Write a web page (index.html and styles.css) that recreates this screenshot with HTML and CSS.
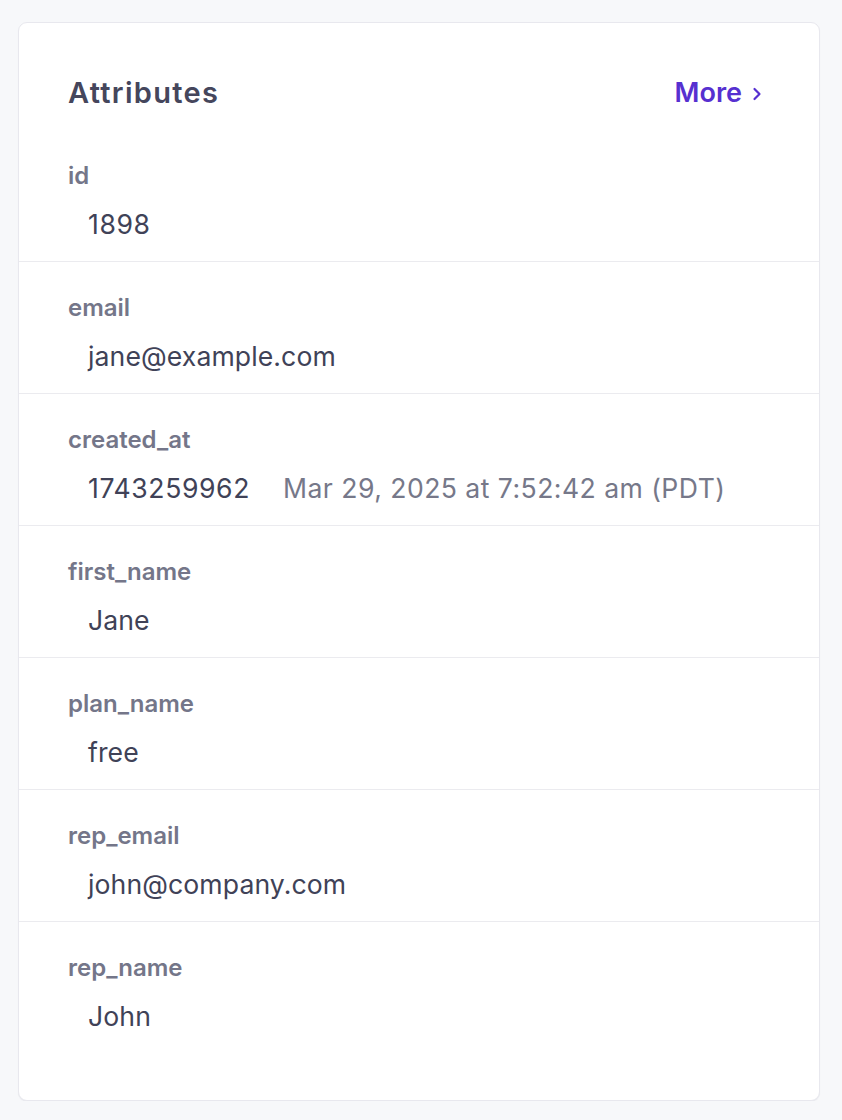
FILE: index.html
```html
<!DOCTYPE html>
<html>
<head>
<meta charset="utf-8">
<link rel="stylesheet" href="styles.css">
</head>
<body>
<div class="card">
  <div class="header">
    <h2 class="title">Attributes</h2>
    <a class="more">More <svg class="chev" viewBox="0 0 10 16" width="10" height="16"><path d="M2.5 3 L7.5 8 L2.5 13" fill="none" stroke="currentColor" stroke-width="2.2" stroke-linecap="round" stroke-linejoin="round"/></svg></a>
  </div>
  <div class="row">
    <div class="label">id</div>
    <div class="value num">1898</div>
  </div>
  <div class="row">
    <div class="label">email</div>
    <div class="value">jane@example.com</div>
  </div>
  <div class="row">
    <div class="label">created_at</div>
    <div class="value"><span class="num">1743259962</span><span class="sub">Mar 29, 2025 at 7:52:42 am (PDT)</span></div>
  </div>
  <div class="row">
    <div class="label">first_name</div>
    <div class="value">Jane</div>
  </div>
  <div class="row">
    <div class="label">plan_name</div>
    <div class="value">free</div>
  </div>
  <div class="row">
    <div class="label">rep_email</div>
    <div class="value">john@company.com</div>
  </div>
  <div class="row last">
    <div class="label">rep_name</div>
    <div class="value">John</div>
  </div>
</div>
</body>
</html>
```
FILE: styles.css
```css
html, body {
  margin: 0;
  padding: 0;
  background: #f7f8fa;
}
body {
  padding: 22px 22px 0 18px;
  font-family: Inter, "Liberation Sans", sans-serif;
}
.card {
  width: 802px;
  box-sizing: border-box;
  background: #ffffff;
  border: 1.5px solid #e8e8ee;
  border-radius: 9px;
  box-shadow: 0 1px 1px rgba(30, 30, 60, 0.06);
  padding: 52px 0 47px 0;
}
.header {
  display: flex;
  align-items: center;
  justify-content: space-between;
  padding: 0 57px 0 49px;
  height: 36px;
  margin-bottom: 19px;
}
.title {
  margin: 0;
  font-size: 29px;
  line-height: 36px;
  font-weight: 600;
  color: #45465c;
  letter-spacing: 1.3px;
}
.more {
  display: flex;
  align-items: center;
  gap: 10px;
  font-size: 27px;
  line-height: 36px;
  font-weight: 600;
  color: #5630d0;
  text-decoration: none;
}
.chev {
  display: block;
  margin-top: 2px;
}
.row {
  padding: 32px 49px 19px 49px;
  border-bottom: 1.5px solid #ebebef;
}
.row.last {
  border-bottom: none;
}
.label {
  font-size: 24px;
  line-height: 28px;
  font-weight: 600;
  color: #747689;
}
.value {
  margin-top: 16px;
  padding-left: 20px;
  font-size: 26.6px;
  line-height: 36px;
  font-weight: 400;
  color: #404257;
  letter-spacing: 0.1px;
}
.num {
  letter-spacing: 0.6px;
}
.sub {
  margin-left: 33px;
  color: #767889;
  letter-spacing: 0.45px;
}
```
